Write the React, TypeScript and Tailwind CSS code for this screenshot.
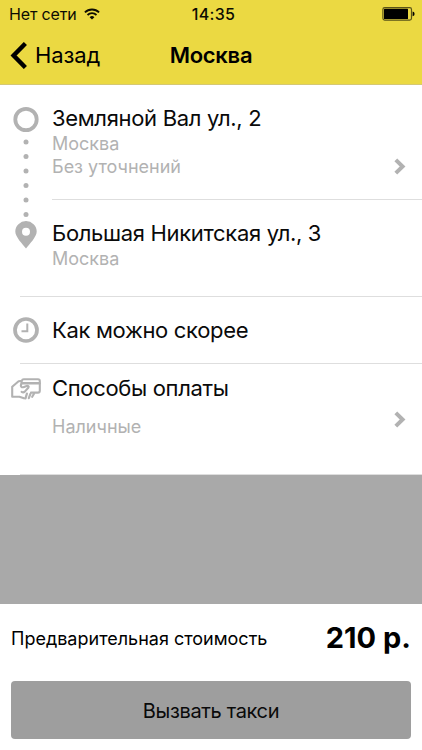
import type { ReactNode } from 'react';

const routeDots = [57, 71.5, 86, 100.5, 115, 129.5];

function WifiIcon() {
  return (
    <svg width="16" height="12" viewBox="0 0 16 12" fill="none" stroke="#0d0c02" strokeWidth="1.8">
      <path d="M0.9 4.4A10.2 10.2 0 0 1 15.1 4.4" />
      <path d="M3.5 7A6.5 6.5 0 0 1 12.5 7" />
      <path d="M8 11.6L5.6 9.2A3.5 3.5 0 0 1 10.4 9.2Z" fill="#0d0c02" stroke="none" />
    </svg>
  );
}

function BatteryIcon() {
  return (
    <svg width="33" height="14" viewBox="0 0 33 14">
      <rect x="0.9" y="0.7" width="28.6" height="12.4" rx="1.8" fill="none" stroke="#5a5318" strokeWidth="1.2" />
      <rect x="2" y="1.8" width="24" height="10.2" rx="0.5" fill="#000" />
      <path d="M30.6 4.6Q32.6 5 32.6 6.9T30.6 9.2Z" fill="#000" />
    </svg>
  );
}

function Chevron() {
  return (
    <svg width="12" height="17" viewBox="0 0 12 17" fill="none" stroke="#b2b2b2" strokeWidth="4">
      <path d="M1.8 1.8L8.6 8.5L1.8 15.2" />
    </svg>
  );
}

function RouteRail() {
  return (
    <svg className="w-[52px] shrink-0" height="211" viewBox="0 0 52 211" fill="#b2b2b2">
      <circle cx="26" cy="34.5" r="10.7" fill="none" stroke="#b2b2b2" strokeWidth="3.8" />
      {routeDots.map((y) => (
        <circle key={y} cx="26" cy={y} r="2.5" />
      ))}
      <path
        fillRule="evenodd"
        d="M26 163.5C22.5 159 15.3 152 15.3 146.5A10.7 10.4 0 0 1 36.7 146.5C36.7 152 29.5 159 26 163.5ZM26 142.7A4 4 0 1 0 26 150.7A4 4 0 1 0 26 142.7Z"
      />
    </svg>
  );
}

function ClockIcon() {
  return (
    <svg width="26" height="26" viewBox="0 0 26 26" fill="none" stroke="#b2b2b2">
      <circle cx="13" cy="13" r="11" strokeWidth="3.7" />
      <path d="M14.3 6.5V14.3H8.5" strokeWidth="2" />
    </svg>
  );
}

function PaymentIcon() {
  return (
    <svg width="30" height="22" viewBox="0 0 30 22" fill="none" stroke="#b2b2b2" strokeWidth="2.1" strokeLinejoin="round" strokeLinecap="round">
      {/* back of the hand */}
      <path d="M9.6 3L7.6 3.3L1.2 8.8V18.8H8.4L13 20.3" />
      {/* card */}
      <path d="M20 14.6H27Q28.8 14.6 28.8 12.8V3Q28.8 1.2 27 1.2H12.8Q11.2 1.2 10.8 2.8L10 7.2" />
      <path d="M11.4 5.2H28.4" strokeWidth="2.6" />
      {/* thumb */}
      <path d="M9.8 7.6C10 9.4 11.4 9.6 13 9L16.4 7.8Q18.4 8 17.3 9.8L13.8 13.6Q12.3 14.9 10.6 13.8" />
      {/* fingers */}
      <path d="M15.9 15.6L14.5 20.4M19.4 15.8L17.8 20.2M23 15.8L21.2 18.8" strokeWidth="2.2" />
    </svg>
  );
}

function Title({ children }: { children: ReactNode }) {
  return <div className="text-[22px] leading-7 tracking-[-0.33px] text-[#0a0a0a] whitespace-nowrap">{children}</div>;
}

function Note({ children }: { children: ReactNode }) {
  return <div className="text-[18px] leading-[23px] text-[#b2b2b2] whitespace-nowrap">{children}</div>;
}

export default function App() {
  return (
    <div className="flex h-[750px] w-[422px] flex-col overflow-hidden bg-white font-['Inter','Liberation_Sans',sans-serif] text-black">
      <header className="h-[85px] shrink-0 border-b border-[#d5c874] bg-[#ebd942]">
        <div className="grid h-7 grid-cols-3 items-center pl-[9px] pr-[7px] text-[16px] text-[#0d0c02]">
          <div className="flex items-center gap-[7px]">
            <span className="whitespace-nowrap tracking-[-0.15px]">Нет сети</span>
            <WifiIcon />
          </div>
          <div className="pl-[3px] text-center font-medium tracking-[0.3px]">14:35</div>
          <div className="flex justify-end">
            <BatteryIcon />
          </div>
        </div>
        <div className="grid h-[55px] grid-cols-3 items-center pl-[10px] pr-[10px]">
          <div className="flex items-center gap-2">
            <svg width="17" height="27" viewBox="0 0 17 27" fill="none" stroke="#000" strokeWidth="4.4">
              <path d="M15.4 1.5L3.6 13.5L15.4 25.5" />
            </svg>
            <span className="text-[22px] tracking-[-0.1px]">Назад</span>
          </div>
          <h1 className="text-center text-[22px] font-semibold tracking-[-0.3px]">Москва</h1>
        </div>
      </header>

      {/* Route: pickup and destination */}
      <section className="flex h-[211px] shrink-0">
        <RouteRail />
        <div className="flex-1">
          <div className="flex h-[115px] justify-between border-b border-[#dedede] pt-[19px] pr-4">
            <div>
              <Title>Земляной Вал ул., 2</Title>
              <Note>Москва</Note>
              <Note>Без уточнений</Note>
            </div>
            <div className="pt-[54px]">
              <Chevron />
            </div>
          </div>
          <div className="pt-[19px]">
            <Title>Большая Никитская ул., 3</Title>
            <Note>Москва</Note>
          </div>
        </div>
      </section>

      <section className="ml-5 flex h-[67px] shrink-0 items-center border-t border-[#dedede]">
        <div className="-ml-5 flex w-[52px] justify-center">
          <ClockIcon />
        </div>
        <Title>Как можно скорее</Title>
      </section>

      <section className="ml-5 flex h-[112px] shrink-0 border-y border-[#dedede]">
        <div className="-ml-5 flex w-[52px] justify-center pt-[14px]">
          <PaymentIcon />
        </div>
        <div className="flex flex-1 justify-between pt-[10px] pr-4">
          <div>
            <Title>Способы оплаты</Title>
            <div className="pt-[13px]">
              <Note>Наличные</Note>
            </div>
          </div>
          <div className="pt-[37px]">
            <Chevron />
          </div>
        </div>
      </section>

      <div className="h-[129px] shrink-0 bg-[#a9a9a9]" />

      <footer className="flex-1 px-[11px]">
        <div className="flex h-[77px] items-center justify-between pb-[9px]">
          <span className="whitespace-nowrap text-[18px]">Предварительная стоимость</span>
          <span className="whitespace-nowrap text-[29px] font-bold">210 р.</span>
        </div>
        <button className="h-[58px] w-full rounded-[4px] bg-[#9e9e9e] pt-px text-[20px] tracking-[-0.35px] text-[#0a0a0a]">
          Вызвать такси
        </button>
      </footer>
    </div>
  );
}
